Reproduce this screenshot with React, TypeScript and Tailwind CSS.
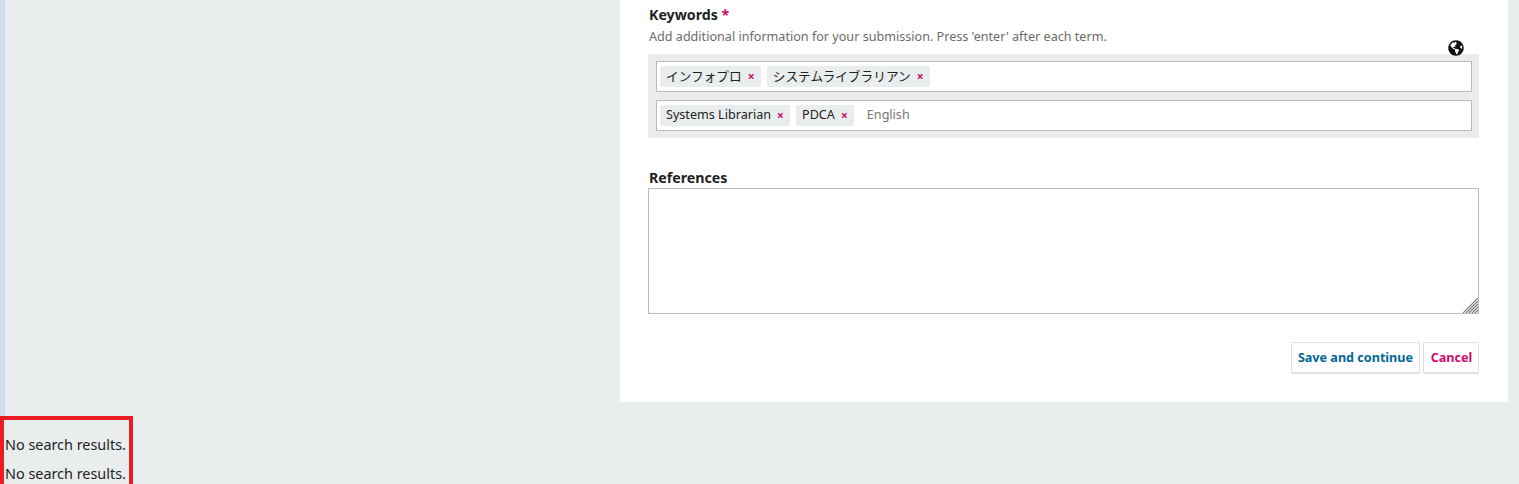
import React from 'react';
import { FaGlobeAmericas } from 'react-icons/fa';

const Tag = ({ label, size }: { label: string; size: string }) => (
  <span className={`flex items-center h-[21px] px-[6px] rounded-[2px] bg-[#e9edee] text-[#222] whitespace-nowrap ${size}`}>
    {label}
    <span className="ml-[6px] w-[7px] text-center text-[12px] font-bold leading-none text-[#d00a6c]">×</span>
  </span>
);

const App: React.FC = () => {
  return (
    <div className="w-[1519px] h-[484px] overflow-hidden bg-[#e9edee] text-[#222] font-['Noto_Sans','Noto_Sans_CJK_JP',sans-serif]">
      <div className="flex h-[416px]">
        <div className="w-[5px] bg-[#d0dcee]" />
        <div className="ml-[615px] w-[888px] h-[402px] bg-white pl-[28px] pr-[29px] pt-[5px]">
          {/* Keywords */}
          <div className="pl-[1px] text-[14.2px] leading-[20px] font-bold">
            Keywords <span className="text-[#d00a6c]">*</span>
          </div>
          <div className="pl-[1px] mt-[2px] text-[12.6px] leading-[20px] text-[#6b6b6b]">
            Add additional information for your submission. Press 'enter' after each term.
          </div>
          <div className="relative mt-[7px] bg-[#e9edee] pl-[8px] pr-[7px] py-[7px] flex flex-col gap-[8px]">
            <FaGlobeAmericas className="absolute right-[15px] top-[-14px] w-[16px] h-[16px] text-[#111]" />
            <div className="flex items-center gap-[6px] h-[31px] px-[3px] bg-white border border-[#bbb]">
              <Tag label="インフォプロ" size="text-[12.7px]" />
              <Tag label="システムライブラリアン" size="text-[12.7px]" />
            </div>
            <div className="flex items-center gap-[6px] h-[31px] px-[3px] bg-white border border-[#bbb]">
              <Tag label="Systems Librarian" size="text-[12.6px]" />
              <Tag label="PDCA" size="text-[12.6px]" />
              <span className="ml-[7px] text-[12.6px] text-[#767676]">English</span>
            </div>
          </div>

          {/* References */}
          <div className="pl-[1px] mt-[30px] text-[14.2px] leading-[20px] font-bold">References</div>
          <div className="relative">
            <textarea className="block w-full h-[126px] bg-white border border-[#bbb] outline-none resize-none" />
            <svg className="absolute right-[1px] bottom-[1px] w-[15px] h-[15px]" viewBox="0 0 15 15" fill="none" stroke="#777" strokeWidth="1.2">
              <path d="M0 15L15 0M3 15L15 3M6 15L15 6M9 15L15 9M12 15l3-3" />
            </svg>
          </div>

          <div className="flex justify-end gap-[3px] mt-[28px]">
            <button className="h-[32px] px-[6px] pt-[1px] bg-white border border-[#e0e0e0] border-b-2 rounded-[2px] text-[12.6px] font-bold text-[#006798] whitespace-nowrap">
              Save and continue
            </button>
            <button className="h-[32px] w-[56px] pt-[1px] pl-[1px] bg-white border border-[#e0e0e0] border-b-2 rounded-[2px] text-[12.6px] font-bold text-[#d00a6c]">
              Cancel
            </button>
          </div>
        </div>
      </div>

      {/* Search results marked in red */}
      <div className="w-[133px] h-[68px] border-[4px] border-b-0 border-[#ed1c24] pl-[1px] pt-[10px] text-[14.4px] leading-[29px] whitespace-nowrap">
        <div>No search results.</div>
        <div>No search results.</div>
      </div>
    </div>
  );
};

export default App;
